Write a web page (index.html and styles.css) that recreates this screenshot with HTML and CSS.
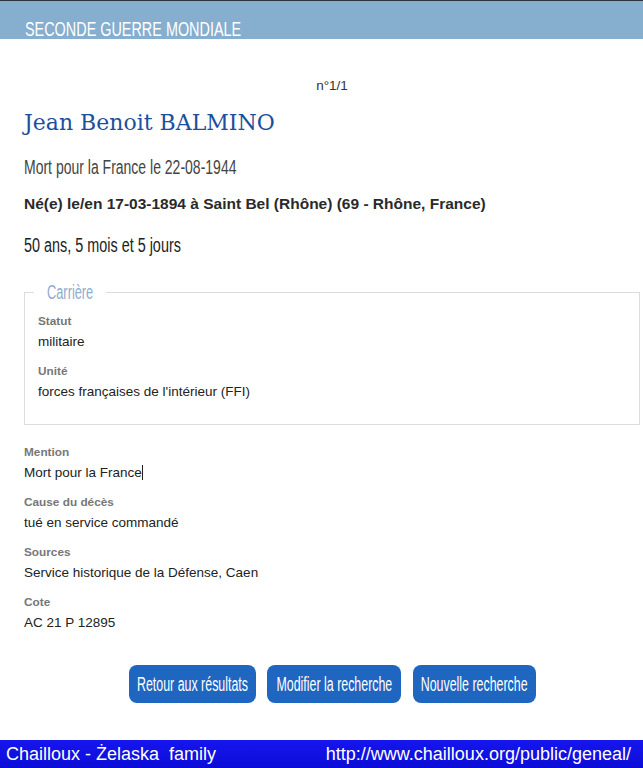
FILE: index.html
```html
<!DOCTYPE html>
<html lang="fr">
<head>
    <meta charset="UTF-8">
    <meta name="viewport" content="width=device-width, initial-scale=1.0">
    <title>Seconde Guerre Mondiale - Jean Benoit BALMINO</title>
    <link rel="stylesheet" href="styles.css">
</head>
<body>
    <div class="band">
        <h2 class="band-title">SECONDE GUERRE MONDIALE</h2>
    </div>

    <div class="record">
        <p class="rank">n°1/1</p>
        <h1 class="name">Jean Benoit BALMINO</h1>
        <p class="death">Mort pour la France le 22-08-1944</p>
        <p class="birth">Né(e) le/en 17-03-1894 à Saint Bel (Rhône) (69 - Rhône, France)</p>
        <p class="age">50 ans, 5 mois et 5 jours</p>

        <fieldset class="career">
            <legend>Carrière</legend>
            <dl class="fields">
                <dt>Statut</dt>
                <dd>militaire</dd>
                <dt>Unité</dt>
                <dd>forces françaises de l'intérieur (FFI)</dd>
            </dl>
        </fieldset>

        <dl class="fields details">
            <dt>Mention</dt>
            <dd>Mort pour la France<span class="caret"></span></dd>
            <dt>Cause du décès</dt>
            <dd>tué en service commandé</dd>
            <dt>Sources</dt>
            <dd>Service historique de la Défense, Caen</dd>
            <dt>Cote</dt>
            <dd>AC 21 P 12895</dd>
        </dl>

        <div class="actions">
            <button class="btn btn-back"><span>Retour aux résultats</span></button>
            <button class="btn btn-edit"><span>Modifier la recherche</span></button>
            <button class="btn btn-new"><span>Nouvelle recherche</span></button>
        </div>
    </div>

    <div class="footer">
        <span>Chailloux - Żelaska &nbsp;family</span>
        <span>http://www.chailloux.org/public/geneal/</span>
    </div>
</body>
</html>
```

FILE: styles.css
```css
* {
    margin: 0;
    padding: 0;
    box-sizing: border-box;
}

body {
    background: #fff;
    font-family: "Liberation Sans", Arial, sans-serif;
    color: #222;
}

/* no condensed face installed: narrow the sans horizontally */
.band-title,
.death,
.age {
    transform-origin: left center;
}

.band {
    height: 39px;
    background-color: #85aecf;
    border-top: 1px solid #2c3440;
    overflow: hidden;
    padding: 19px 0 0 25px;
}

.band-title {
    font-weight: normal;
    font-size: 21px;
    line-height: 18px;
    color: #fff;
    transform: scaleX(0.686);
}

.record {
    padding: 0 3px 0 24px;
}

.rank {
    margin-top: 39px;
    text-align: center;
    font-size: 13.5px;
    line-height: 16px;
    color: #333;
}

.name {
    margin-top: 15px;
    font-family: "DejaVu Serif", Georgia, serif;
    font-weight: normal;
    font-size: 22px;
    line-height: 28px;
    color: #1d4f9f;
}

.death {
    margin-top: 18px;
    font-size: 20px;
    line-height: 24px;
    color: #444;
    transform: scaleX(0.7);
}

.birth {
    margin-top: 15px;
    font-weight: bold;
    font-size: 15.5px;
    line-height: 20px;
    color: #2a2a2a;
}

.age {
    margin-top: 19px;
    font-size: 20px;
    line-height: 24px;
    color: #222;
    transform: scaleX(0.72);
}

.career {
    margin-top: 23px;
    border: 1px solid #dcdcdc;
    padding: 10px 13px 22px 13px;
}

.career legend {
    margin-left: -4px;
    padding: 0;
    font-size: 20px;
    line-height: 24px;
    color: #8eacd0;
    transform: scaleX(0.64);
}

.fields dt {
    font-size: 11.8px;
    font-weight: bold;
    line-height: 14px;
    color: #777;
}

.fields dd {
    margin-top: 4px;
    font-size: 13.5px;
    line-height: 20px;
    color: #222;
}

.fields dd + dt {
    margin-top: 12px;
}

.details {
    margin-top: 20px;
}

.caret {
    display: inline-block;
    width: 1px;
    height: 15px;
    background: #222;
    vertical-align: -3px;
}

.actions {
    margin-top: 32px;
    display: flex;
    justify-content: center;
    gap: 11.5px;
}

.btn {
    height: 38px;
    border: none;
    border-radius: 8px;
    background-color: #1f66c1;
    color: #fff;
    font-family: "Liberation Sans", Arial, sans-serif;
    font-size: 20px;
    display: flex;
    align-items: center;
    justify-content: center;
    cursor: pointer;
}

.btn span {
    display: inline-block;
    white-space: nowrap;
    transform: scaleX(0.62);
}

.btn-back {
    width: 127px;
}

.btn-edit {
    width: 134px;
}

.btn-new {
    width: 123px;
}

.footer {
    margin-top: 37px;
    height: 28px;
    background: linear-gradient(#1616ee, #0c0cd8);
    display: flex;
    justify-content: space-between;
    align-items: center;
    padding: 0 12px 0 6px;
    font-size: 18px;
    color: #fff;
}
```
